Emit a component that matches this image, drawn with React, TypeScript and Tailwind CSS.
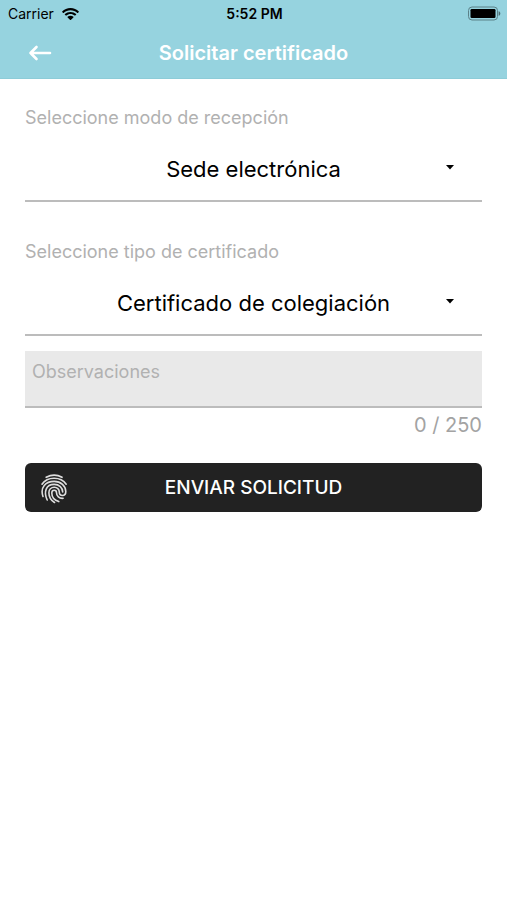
import React, { useState } from 'react';

const MAX_LENGTH = 250;

function StatusBar() {
  return (
    <div className="grid grid-cols-3 items-center h-[27px] pl-2 pr-[6px] text-black">
      <div className="flex items-center gap-2">
        <span className="text-[14px]">Carrier</span>
        <svg viewBox="0 0 17 12" className="w-[17px] h-3" fill="currentColor" aria-hidden="true">
          <path d="M8.5 0C5.2 0 2.3 1.3.2 3.4c-.2.2-.2.4 0 .6l.9.9c.2.2.4.2.6 0C3.5 3.200 5.900 2.200 8.500 2.200s5 1 6.800 2.700c.2.2.4.2.6 0l.9-.9c.2-.2.2-.4 0-.6C14.700 1.300 11.800 0 8.500 0z" />
          <path d="M8.500 3.900c-2.200 0-4.100.8-5.600 2.200-.2.2-.2.4 0 .6l.9.9c.2.2.4.2.6 0 1.100-1 2.500-1.600 4.100-1.600s3 .6 4.100 1.600c.2.2.4.2.6 0l.9-.9c.2-.2.2-.4 0-.6-1.500-1.400-3.400-2.200-5.600-2.200z" />
          <path d="M8.500 7.700c-1.100 0-2.100.4-2.900 1.100-.2.2-.2.4 0 .6l2.600 2.500c.2.1.4.1.6 0l2.600-2.500c.2-.2.2-.4 0-.6-.8-.7-1.800-1.100-2.900-1.100z" />
        </svg>
      </div>
      <span className="text-center text-[14px] font-semibold whitespace-nowrap">5:52 PM</span>
      <svg viewBox="0 0 34 15" className="w-[34px] h-[15px] justify-self-end" aria-hidden="true">
        <rect x="1.500" y="1" width="29" height="13" rx="3.500" fill="none" stroke="#5b8188" />
        <rect x="3.500" y="3" width="25" height="9" rx="1.200" fill="#000" />
        <path d="M31.600 5.200c1.200.4 1.700 1.200 1.700 2.300s-.5 1.900-1.700 2.300z" fill="#4b6c72" />
      </svg>
    </div>
  );
}

function FingerprintIcon() {
  return (
    <svg
      viewBox="0 0 28 30"
      className="w-7 h-[30px] justify-self-center text-[#dedede]"
      fill="none"
      stroke="currentColor"
      strokeWidth="1.600"
      strokeLinecap="round"
      aria-hidden="true"
    >
      <path d="M6.200 3.300C11 .7 17.400.7 22 3.300" />
      <path d="M2 10.200C7.400 2.300 20.800 2.300 26.200 10.200" />
      <path d="M3 22.500C-.2 13 5.800 7.400 14.200 7.400c6.600 0 11.600 4.400 11.600 10.200 0 2.600-1.500 3.900-3.300 3.900-2 0-3.200-1.500-3.200-3.500 0-2.700-2.100-4.700-5-4.700-3.200 0-5.400 2.300-5.400 5.400 0 4.400 2.300 7.700 5.600 9.800" />
      <path d="M7.200 26C3.400 17.700 6 10.400 14.200 10.400c4.900 0 8.500 3.200 8.500 7.600" />
      <path d="M18.800 27.600c-4.400-1.500-7-4.800-7-8.700 0-1.500 1-2.600 2.400-2.600s2.300 1 2.300 2.500c0 3.200 2.700 5.900 6.600 5.500" />
    </svg>
  );
}

interface SelectFieldProps {
  id: string;
  label: string;
  options: string[];
}

function SelectField({ id, label, options }: SelectFieldProps) {
  return (
    <div className="flex flex-col">
      <label htmlFor={id} className="text-[18px] leading-6 text-[#b1b1b1]">
        {label}
      </label>
      <div className="grid items-center mt-2 border-b-2 border-[#bcbcbc]">
        <select
          id={id}
          className="col-start-1 row-start-1 appearance-none w-full h-[62px] bg-transparent text-[22px] text-black [text-align-last:center] outline-none"
        >
          {options.map((option) => (
            <option key={option}>{option}</option>
          ))}
        </select>
        <svg
          viewBox="0 0 8 5"
          className="col-start-1 row-start-1 justify-self-end w-2 h-[5px] mr-7 mb-1 pointer-events-none"
          aria-hidden="true"
        >
          <path d="M0 0h8L4 4.500z" fill="#000" />
        </svg>
      </div>
    </div>
  );
}

export default function App() {
  const [notes, setNotes] = useState('');

  return (
    <div className="min-h-screen bg-white font-['Inter',sans-serif]">
      <header className="bg-[#96d3df] border-b border-[#8dccd8]">
        <StatusBar />
        <div className="grid grid-cols-[56px_1fr_56px] items-center h-[51px]">
          <button type="button" aria-label="Volver" className="flex justify-end pr-1 text-white">
            <svg
              viewBox="0 0 24 16"
              className="w-6 h-4"
              fill="none"
              stroke="currentColor"
              strokeWidth="2.600"
              strokeLinecap="round"
              strokeLinejoin="round"
              aria-hidden="true"
            >
              <path d="M22 8H2.500M8.500 2l-6 6 6 6" />
            </svg>
          </button>
          <h1 className="text-center text-[20px] font-semibold text-white">Solicitar certificado</h1>
        </div>
      </header>

      <form className="flex flex-col px-[25px] pt-[27px]" onSubmit={(e) => e.preventDefault()}>
        <div className="flex flex-col gap-[38px]">
          <SelectField
            id="modo"
            label="Seleccione modo de recepción"
            options={['Sede electrónica', 'Correo postal']}
          />
          <SelectField
            id="tipo"
            label="Seleccione tipo de certificado"
            options={['Certificado de colegiación', 'Certificado de cuotas']}
          />
        </div>

        <textarea
          aria-label="Observaciones"
          placeholder="Observaciones"
          maxLength={MAX_LENGTH}
          value={notes}
          onChange={(e) => setNotes(e.target.value)}
          className="block w-full h-[57px] mt-[15px] px-[7px] py-[9px] resize-none bg-[#e9e9e9] border-b-2 border-[#bcbcbc] text-[18px] leading-6 text-black placeholder:text-[#b1b1b1] outline-none"
        />
        <p className="mt-[3px] text-right text-[20px] leading-7 text-[#a3a3a3]">
          {notes.length} / {MAX_LENGTH}
        </p>

        <button
          type="submit"
          className="grid grid-cols-[48px_1fr_48px] items-center w-full h-[49px] mt-6 pt-[2px] px-[5px] rounded-md bg-[#222222] text-white"
        >
          <FingerprintIcon />
          <span className="text-[19px] font-medium">ENVIAR SOLICITUD</span>
        </button>
      </form>
    </div>
  );
}
